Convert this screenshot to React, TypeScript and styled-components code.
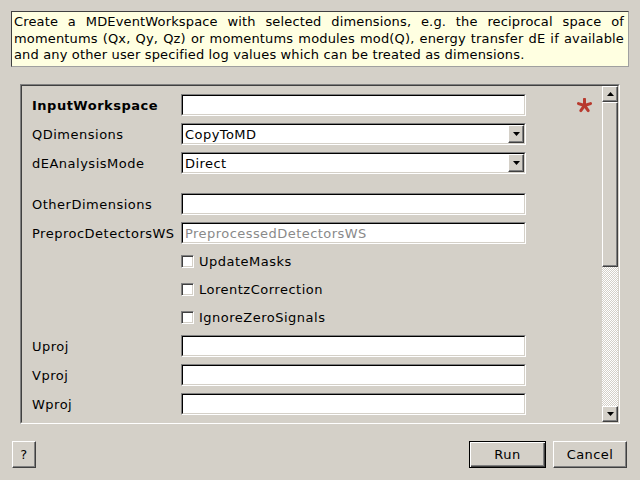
import React from "react";
import styled, { createGlobalStyle, css } from "styled-components";

const Global = createGlobalStyle`
  html, body { margin: 0; padding: 0; background: #d4d0c8; }
  body { font-family: "DejaVu Sans", "Liberation Sans", sans-serif; font-size: 13px; color: #000; }
`;

const Window = styled.div`
  width: 640px;
  height: 480px;
  box-sizing: border-box;
  background: #d4d0c8;
  display: flex;
  flex-direction: column;
  padding: 11px 11px 0 11px;
`;

const Description = styled.div`
  box-sizing: border-box;
  height: 56px;
  background: #ffffe1;
  border-top: 1px solid #404040;
  border-left: 1px solid #404040;
  border-right: 1px solid #a0a0a0;
  border-bottom: 1px solid #a0a0a0;
  padding: 2px 4px 0 2px;
  font-family: "DejaVu Sans", sans-serif;
  font-size: 13px;
  letter-spacing: 0.15px;
  line-height: 16.5px;
  text-align: justify;
`;

const FullLine = styled.span`
  display: block;
  text-align: justify;
  text-align-last: justify;
  white-space: nowrap;
`;

const Panel = styled.div`
  box-sizing: border-box;
  margin: 17px 9px 0 9px;
  height: 340px;
  display: flex;
  border-top: 1px solid #808080;
  border-left: 1px solid #808080;
  border-right: 1px solid #ffffff;
  border-bottom: 1px solid #ffffff;
`;

const PanelInner = styled.div`
  flex: 1;
  display: flex;
  border-top: 1px solid #404040;
  border-left: 1px solid #404040;
  border-right: 1px solid #d4d0c8;
  border-bottom: 1px solid #d4d0c8;
  overflow: hidden;
`;

const Form = styled.div`
  flex: 1;
  padding: 8px 0 0 10px;
  display: flex;
  flex-direction: column;
`;

const Row = styled.div<{ $h?: number; $gap?: number }>`
  display: grid;
  grid-template-columns: 149px 345px 1fr;
  align-items: center;
  height: ${(p) => p.$h ?? 22}px;
  margin-bottom: ${(p) => p.$gap ?? 7}px;
`;

const Label = styled.div<{ $bold?: boolean }>`
  font-size: 13px;
  letter-spacing: 0.5px;
  white-space: nowrap;
  ${(p) => p.$bold && css`font-weight: bold;`}
`;

const sunken = css`
  box-sizing: border-box;
  border-top: 1px solid #808080;
  border-left: 1px solid #808080;
  border-right: 1px solid #ffffff;
  border-bottom: 1px solid #ffffff;
`;

const Field = styled.div`
  ${sunken};
  height: 22px;
  display: flex;
`;

const FieldInner = styled.div<{ $placeholder?: boolean }>`
  flex: 1;
  display: flex;
  align-items: center;
  background: #fff;
  border-top: 1px solid #000;
  border-left: 1px solid #000;
  border-right: 1px solid #d4d0c8;
  border-bottom: 1px solid #d4d0c8;
  padding-left: 2px;
  font-size: 13px;
  letter-spacing: 0.45px;
  color: ${(p) => (p.$placeholder ? "#8a8a8a" : "#000")};
  white-space: nowrap;
  overflow: hidden;
`;

const ComboText = styled.div`
  flex: 1;
`;

const raised = css`
  box-sizing: border-box;
  background: #d4d0c8;
  border-top: 1px solid #ffffff;
  border-left: 1px solid #ffffff;
  border-right: 1px solid #404040;
  border-bottom: 1px solid #404040;
  box-shadow: inset -1px -1px 0 #808080, inset 1px 1px 0 #d4d0c8;
`;

const ArrowButton = styled.div`
  ${raised};
  width: 16px;
  align-self: stretch;
  display: flex;
  align-items: center;
  justify-content: center;
`;

const CheckWrap = styled.div`
  grid-column: 2;
  display: flex;
  align-items: center;
  gap: 5px;
`;

const CheckBox = styled.div`
  ${sunken};
  width: 13px;
  height: 13px;
  background: #fff;
  box-shadow: inset 1px 1px 0 #404040, inset -1px -1px 0 #d4d0c8;
`;

const Star = styled.div`
  display: flex;
  justify-content: flex-end;
  padding-right: 10px;
`;

const ScrollBar = styled.div`
  width: 16px;
  display: flex;
  flex-direction: column;
`;

const SBButton = styled.div`
  ${raised};
  height: 16px;
  display: flex;
  align-items: center;
  justify-content: center;
`;

const Thumb = styled.div`
  ${raised};
  height: 165px;
`;

const Track = styled.div`
  flex: 1;
  background-color: #d4d0c8;
  background-image: conic-gradient(#ffffff 25%, #d4d0c8 0 50%, #ffffff 0 75%, #d4d0c8 0);
  background-size: 2px 2px;
`;

const Footer = styled.div`
  display: flex;
  align-items: flex-start;
  margin-top: 17px;
  padding-left: 1px;
  padding-right: 2px;
`;

const Button = styled.div<{ $default?: boolean; $w: number }>`
  ${raised};
  width: ${(p) => p.$w}px;
  height: 27px;
  display: flex;
  align-items: center;
  justify-content: center;
  font-size: 13px;
  letter-spacing: 0.45px;
  ${(p) =>
    p.$default &&
    css`
      border: 1px solid #000;
      box-shadow: inset 1px 1px 0 #fff, inset -1px -1px 0 #404040, inset -2px -2px 0 #808080;
    `}
`;

const Spacer = styled.div`
  flex: 1;
`;

const Buttons = styled.div`
  display: flex;
  gap: 7px;
`;

const DownArrow = () => (
  <svg width="7" height="4" viewBox="0 0 7 4">
    <path d="M0 0H7L3.5 4Z" fill="#000" />
  </svg>
);

const UpArrow = () => (
  <svg width="7" height="4" viewBox="0 0 7 4">
    <path d="M0 4H7L3.5 0Z" fill="#000" />
  </svg>
);

const Asterisk = () => {
  const arms = [0, 72, 144, 216, 288];
  return (
    <svg width="15" height="15" viewBox="-7.5 -7.5 15 15">
      {arms.map((a) => (
        <line
          key={a}
          x1="0"
          y1="0"
          x2={Math.sin((a * Math.PI) / 180) * 6.3}
          y2={-Math.cos((a * Math.PI) / 180) * 6.3}
          stroke="#b83a2e"
          strokeWidth="3"
          strokeLinecap="round"
        />
      ))}
    </svg>
  );
};

const TextRow = ({ label, bold, value, placeholder, star, gap }: {
  label: string; bold?: boolean; value?: string; placeholder?: string; star?: boolean; gap?: number;
}) => (
  <Row $gap={gap}>
    <Label $bold={bold}>{label}</Label>
    <Field>
      <FieldInner $placeholder={!!placeholder}>{value ?? placeholder ?? ""}</FieldInner>
    </Field>
    {star ? (
      <Star>
        <Asterisk />
      </Star>
    ) : (
      <div />
    )}
  </Row>
);

const ComboRow = ({ label, value, gap }: { label: string; value: string; gap?: number }) => (
  <Row $gap={gap}>
    <Label>{label}</Label>
    <Field>
      <FieldInner>
        <ComboText>{value}</ComboText>
        <ArrowButton>
          <DownArrow />
        </ArrowButton>
      </FieldInner>
    </Field>
    <div />
  </Row>
);

const CheckRow = ({ label }: { label: string }) => (
  <Row $h={21}>
    <CheckWrap>
      <CheckBox />
      <Label>{label}</Label>
    </CheckWrap>
  </Row>
);

export default function App() {
  return (
    <>
      <Global />
      <Window>
        <Description>
          <FullLine>Create a MDEventWorkspace with selected dimensions, e.g. the reciprocal space of</FullLine>
          <FullLine>momentums (Qx, Qy, Qz) or momentums modules mod(Q), energy transfer dE if available</FullLine>
          and any other user specified log values which can be treated as dimensions.
        </Description>
        <Panel>
          <PanelInner>
            <Form>
              <TextRow label="InputWorkspace" bold star />
              <ComboRow label="QDimensions" value="CopyToMD" />
              <ComboRow label="dEAnalysisMode" value="Direct" gap={19} />
              <TextRow label="OtherDimensions" />
              <TextRow label="PreprocDetectorsWS" placeholder="PreprocessedDetectorsWS" />
              <CheckRow label="UpdateMasks" />
              <CheckRow label="LorentzCorrection" />
              <CheckRow label="IgnoreZeroSignals" />
              <TextRow label="Uproj" />
              <TextRow label="Vproj" />
              <TextRow label="Wproj" />
            </Form>
            <ScrollBar>
              <SBButton>
                <UpArrow />
              </SBButton>
              <Thumb />
              <Track />
              <SBButton>
                <DownArrow />
              </SBButton>
            </ScrollBar>
          </PanelInner>
        </Panel>
        <Footer>
          <Button $w={24}>?</Button>
          <Spacer />
          <Buttons>
            <Button $w={77} $default>
              Run
            </Button>
            <Button $w={74}>Cancel</Button>
          </Buttons>
        </Footer>
      </Window>
    </>
  );
}
